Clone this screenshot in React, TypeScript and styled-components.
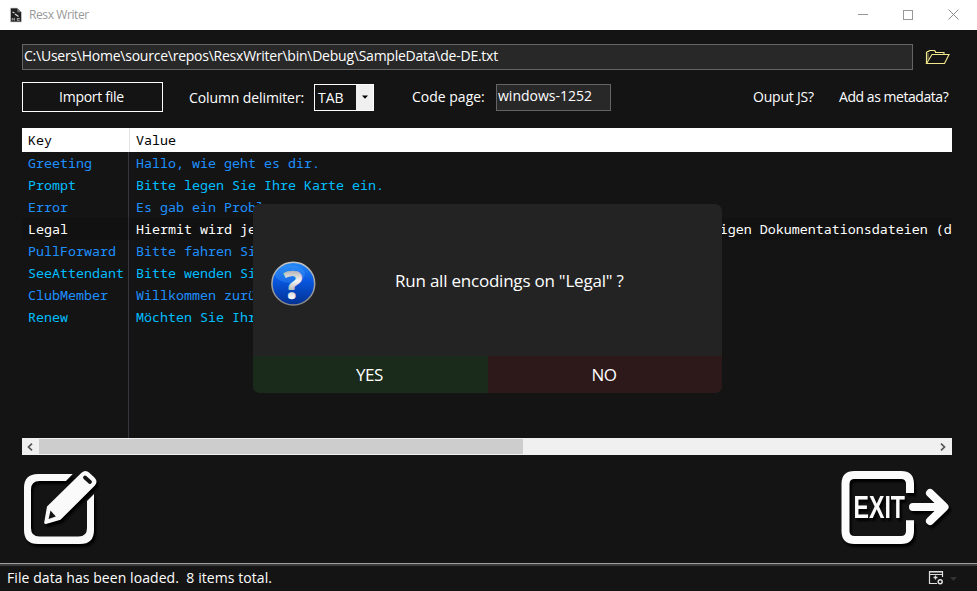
import React from "react";
import styled, { createGlobalStyle } from "styled-components";

const GlobalStyle = createGlobalStyle`
  *, *::before, *::after { box-sizing: border-box; }
  body { margin: 0; background: #141414; }
  button { font: inherit; letter-spacing: inherit; color: inherit; padding: 0; cursor: default; }
`;

const Window = styled.div`
  position: relative;
  display: flex;
  flex-direction: column;
  width: 977px;
  height: 591px;
  overflow: hidden;
  background: #141414;
  color: #fff;
  font: 14px/20px "Open Sans", sans-serif;
`;

const TitleBar = styled.header`
  display: flex;
  align-items: center;
  flex: 0 0 30px;
  padding-left: 9px;
  background: #fff;
  color: #999;
`;

const AppTitle = styled.span`
  flex: 1;
  margin-left: 6px;
  font-size: 12px;
  letter-spacing: -0.4px;
`;

const CaptionButton = styled.button`
  display: flex;
  align-items: center;
  justify-content: center;
  width: 46px;
  height: 30px;
  border: 0;
  background: none;
`;

const Content = styled.main`
  display: flex;
  flex-direction: column;
  flex: 1;
  padding: 14px 25px 0 22px;
`;

const PathRow = styled.div`
  display: flex;
  align-items: center;
  gap: 12px;
`;

const Field = styled.div<{ $width: number; $height: number; $tracking?: number; $line?: number }>`
  width: ${(p) => p.$width}px;
  height: ${(p) => p.$height}px;
  padding-left: 1px;
  border: 1px solid #646464;
  background: #282828;
  line-height: ${(p) => p.$line ?? 22}px;
  letter-spacing: ${(p) => p.$tracking ?? 0}px;
  white-space: pre;
`;

const Options = styled.div`
  display: flex;
  align-items: center;
  height: 30px;
  margin-top: 12px;
`;

const ImportButton = styled.button`
  width: 141px;
  height: 30px;
  padding-right: 2px;
  border: 1px solid #fff;
  background: #141414;
  letter-spacing: -0.27px;
`;

const Label = styled.span<{ $width: number; $gap: number; $tracking: number; $drop?: number }>`
  width: ${(p) => p.$width}px;
  margin-left: ${(p) => p.$gap}px;
  padding-top: ${(p) => p.$drop ?? 0}px;
  letter-spacing: ${(p) => p.$tracking}px;
  white-space: nowrap;
`;

const Select = styled.div`
  display: flex;
  width: 60px;
  height: 27px;
  border: 1px solid #fff;
  line-height: 25px;
`;

const SelectValue = styled.span`
  flex: 1;
  padding-left: 3px;
`;

const SelectArrow = styled.span`
  display: flex;
  align-items: center;
  justify-content: center;
  width: 17px;
  background: #f0f0f0;
`;

const Table = styled.section`
  width: 930px;
  height: 310px;
  margin-top: 16px;
  display: flex;
  flex-direction: column;
  overflow: hidden;
  font: 13.333px/22px "Noto Sans Mono", "DejaVu Sans Mono", monospace;
`;

const HeaderRow = styled.div`
  display: grid;
  grid-template-columns: 108px 1fr;
  flex: 0 0 24px;
  background: #fff;
  color: #000;
  line-height: 24px;
`;

const HeaderCell = styled.div`
  padding-left: 6px;
  &:first-child { border-right: 1px solid #e5e5e5; }
`;

const TableBody = styled.div`
  flex: 1;
  background: linear-gradient(#35353c, #35353c) 106px 0 / 1px 100% no-repeat;
`;

type Tone = "blue" | "cyan" | "selected";
const toneColor: Record<Tone, string> = { blue: "#1e90ff", cyan: "#00bfff", selected: "#fff" };

const Row = styled.div<{ $tone: Tone }>`
  display: grid;
  grid-template-columns: 108px 1fr;
  height: 22px;
  color: ${(p) => toneColor[p.$tone]};
  background: ${(p) => (p.$tone === "selected" ? "rgba(0, 0, 0, 0.12)" : "none")};
`;

const Cell = styled.div`
  padding-left: 6px;
  overflow: hidden;
  white-space: pre;
`;

const ScrollBar = styled.div`
  display: grid;
  grid-template-columns: 17px 484px 1fr 17px;
  width: 930px;
  height: 17px;
  background: #f0f0f0;
`;

const Thumb = styled.div`
  grid-column: 2;
  margin: 1px 0;
  background: #cdcdcd;
`;

const ScrollArrow = styled.span<{ $col: number }>`
  grid-column: ${(p) => p.$col};
  grid-row: 1;
  display: flex;
  align-items: center;
  justify-content: center;
  padding-right: 1px;
`;

const Actions = styled.div`
  display: flex;
  justify-content: space-between;
  margin-top: 11px;
`;

const IconButton = styled.button`
  display: block;
  height: 84px;
  border: 0;
  background: none;
  svg { display: block; filter: drop-shadow(2px 3px 1px #000); }
`;

const StatusBar = styled.footer`
  display: flex;
  align-items: center;
  flex: 0 0 28px;
  padding: 0 19px 0 7px;
  border-top: 1px solid #a0a0a0;
  box-shadow: inset 0 2px #3c3c3c;
  letter-spacing: 0.07px;
`;

const StatusText = styled.span`
  flex: 1;
  white-space: pre;
`;

const Dialog = styled.div`
  position: absolute;
  left: 253px;
  top: 204px;
  display: flex;
  flex-direction: column;
  width: 469px;
  height: 189px;
  border-radius: 7px;
  overflow: hidden;
  background: #232323;
  font-size: 17px;
  line-height: 24px;
`;

const DialogBody = styled.div`
  display: flex;
  flex: 1;
  padding-left: 17px;
`;

const QuestionIcon = styled.svg`
  margin-top: 57px;
  flex: none;
  overflow: visible;
`;

const Message = styled.p`
  margin: 65px 0 0 78px;
  letter-spacing: -0.22px;
  white-space: nowrap;
`;

const DialogButtons = styled.div`
  display: grid;
  grid-template-columns: 235px 234px;
  height: 37px;
`;

const DialogButton = styled.button<{ $color: string }>`
  border: 0;
  padding: 1px 2px 0 0;
  background: ${(p) => p.$color};
  letter-spacing: -0.5px;
`;

const rows: { key: string; value: string; tone: Tone }[] = [
  { key: "Greeting", value: "Hallo, wie geht es dir.", tone: "blue" },
  { key: "Prompt", value: "Bitte legen Sie Ihre Karte ein.", tone: "cyan" },
  { key: "Error", value: "Es gab ein Problem.", tone: "blue" },
  {
    key: "Legal",
    value: "Hiermit wird jeder Person, die eine Kopie dieser Software und der zugehörigen Dokumentationsdateien (d",
    tone: "selected",
  },
  { key: "PullForward", value: "Bitte fahren Sie", tone: "blue" },
  { key: "SeeAttendant", value: "Bitte wenden Sie", tone: "cyan" },
  { key: "ClubMember", value: "Willkommen zurück", tone: "blue" },
  { key: "Renew", value: "Möchten Sie Ihre", tone: "cyan" },
];

const FileIcon = () => (
  <svg width="14" height="16" viewBox="0 0 14 16">
    <path d="M1.500 1H8l4.500 4.500V15h-11z" fill="#202020" stroke="#d0d0d0" strokeWidth="0.700" />
    <path d="M8.300 1v4.200h4.200z" fill="#777" />
    <path d="M3.500 5l2 1M6 7l3.500 2.500" stroke="#ddd" strokeWidth="1.200" />
    <path d="M3.200 13.500v-2.200l1.100 1 1.100-1v2.200M10.700 11.500H8.300v1.800h2.400" fill="none" stroke="#bbb" strokeWidth="0.900" />
  </svg>
);

const FolderIcon = () => (
  <svg width="26" height="16" viewBox="0 0 26 16" fill="none" stroke="#f0e68c" strokeWidth="1.150">
    <path d="M1.500 14.500v-11l1-1h1l1-1h5l1 1v1h8.500v2" />
    <path d="M1.500 14.500L7 5.500h17l-4.500 9z" />
    <path d="M3 4v7" stroke="#8c8757" />
  </svg>
);

const EditIcon = () => (
  <svg width="80" height="84" viewBox="22 466 80 84">
    <path
      d="M72.700 474H38Q24 474 24 488v42q0 14 14 14h42q14 0 14-14v-36l-7 7v27q0 8.500-8.500 8.500H39.500q-8.500 0-8.500-8.500V489.500q0-8.500 8.500-8.500H66z"
      fill="#fafafa"
    />
    <path
      d="M47 506.500L81.500 472.700q4-3.500 7.800 0l5.400 5.100q3.500 4 .2 7.700L60.500 519.800 46 523.900q-2.200.4-1.700-1.800z"
      fill="#fafafa"
    />
    <path d="M85 477.500l5 4.500" stroke="#141414" strokeWidth="3.800" strokeLinecap="round" />
    <path d="M50.500 510.500l5.300 6-7.200 2.500z" fill="#141414" />
  </svg>
);

const ExitIcon = () => (
  <svg width="112" height="84" viewBox="840 466 112 84">
    <path
      d="M910 493V484q0-9-9-9H854.500q-9 0-9 9v47q0 9 9 9H901q9 0 9-9V520.300"
      fill="none"
      stroke="#fcfcfc"
      strokeWidth="8"
    />
    <path
      d="M913 507H943M930 493l14.500 14-14.500 14"
      fill="none"
      stroke="#fcfcfc"
      strokeWidth="8"
      strokeLinecap="round"
      strokeLinejoin="round"
    />
    <text
      x="853.500"
      y="517.500"
      fill="#fcfcfc"
      fontFamily="Liberation Sans"
      fontWeight="700"
      fontSize="31"
      textLength="51.500"
      lengthAdjust="spacingAndGlyphs"
    >
      EXIT
    </text>
  </svg>
);

const SettingsWindowIcon = () => (
  <svg width="30" height="15" viewBox="0 0 30 15">
    <path d="M14.500 7V1.500H1.500V13.500H9M2 4.500h12" fill="none" stroke="#dedede" strokeWidth="1.200" />
    <path d="M2 2.500h12" stroke="#888" />
    <path d="M7.500 5.500v4M5.500 7.500h4" stroke="#ddd" strokeWidth="1.300" />
    <circle cx="12.200" cy="11.700" r="2" fill="none" stroke="#e8e8e8" strokeWidth="1.400" />
    <path d="M22 7h7l-3.500 4z" fill="#333" />
  </svg>
);

export default function App() {
  return (
    <>
      <GlobalStyle />
      <Window>
        <TitleBar>
          <FileIcon />
          <AppTitle>Resx Writer</AppTitle>
          <CaptionButton aria-label="Minimize">
            <svg width="12" height="10"><path d="M2 4.500h10" stroke="#999" /></svg>
          </CaptionButton>
          <CaptionButton aria-label="Maximize">
            <svg width="10" height="10"><rect x=".5" y=".5" width="9" height="9" fill="none" stroke="#999" /></svg>
          </CaptionButton>
          <CaptionButton aria-label="Close">
            <svg width="12" height="12"><path d="M.5 .5l10 10M10.500 .5l-10 10" stroke="#8c8c8c" /></svg>
          </CaptionButton>
        </TitleBar>

        <Content>
          <PathRow>
            <Field $width={891} $height={26} $tracking={-0.24} $line={21}>
              C:\Users\Home\source\repos\ResxWriter\bin\Debug\SampleData\de-DE.txt
            </Field>
            <FolderIcon />
          </PathRow>

          <Options>
            <ImportButton>Import file</ImportButton>
            <Label $width={125} $gap={26} $tracking={-0.1} $drop={2}>Column delimiter:</Label>
            <Select>
              <SelectValue>TAB</SelectValue>
              <SelectArrow>
                <svg width="6" height="4"><path d="M0 .5h6L3 3.700z" fill="#000" /></svg>
              </SelectArrow>
            </Select>
            <Label $width={84} $gap={38} $tracking={0}>Code page:</Label>
            <Field $width={115} $height={27}>windows-1252</Field>
            <Label $width={61} $gap={142} $tracking={-0.22}>Ouput JS?</Label>
            <Label $width={111} $gap={25} $tracking={-0.45}>Add as metadata?</Label>
          </Options>

          <Table>
            <HeaderRow>
              <HeaderCell>Key</HeaderCell>
              <HeaderCell>Value</HeaderCell>
            </HeaderRow>
            <TableBody>
              {rows.map((row) => (
                <Row key={row.key} $tone={row.tone}>
                  <Cell>{row.key}</Cell>
                  <Cell>{row.value}</Cell>
                </Row>
              ))}
            </TableBody>
          </Table>
          <ScrollBar>
            <ScrollArrow $col={1}>
              <svg width="6" height="8"><path d="M5 .7L1.500 4 5 7.300" fill="none" stroke="#555" strokeWidth="1.700" /></svg>
            </ScrollArrow>
            <Thumb />
            <ScrollArrow $col={4}>
              <svg width="6" height="8"><path d="M1 .7L4.500 4 1 7.300" fill="none" stroke="#555" strokeWidth="1.700" /></svg>
            </ScrollArrow>
          </ScrollBar>

          <Actions>
            <IconButton aria-label="Edit"><EditIcon /></IconButton>
            <IconButton aria-label="Exit"><ExitIcon /></IconButton>
          </Actions>
        </Content>

        <StatusBar>
          <StatusText>File data has been loaded.  8 items total.</StatusText>
          <SettingsWindowIcon />
        </StatusBar>

        <Dialog role="dialog">
          <DialogBody>
            <QuestionIcon width="47" height="47" viewBox="0 0 47 47">
              <defs>
                <linearGradient id="ball" x1="0" y1="0" x2="0" y2="1">
                  <stop offset="0" stopColor="#258cf8" />
                  <stop offset=".45" stopColor="#0755dd" />
                  <stop offset="1" stopColor="#03308f" />
                </linearGradient>
                <linearGradient id="rim" x1="0" y1="0" x2="0" y2="1">
                  <stop offset="0" stopColor="#c4c4c4" />
                  <stop offset="1" stopColor="#858585" />
                </linearGradient>
                <linearGradient id="mark" x1="0" y1="8" x2="0" y2="38" gradientUnits="userSpaceOnUse">
                  <stop offset="0" stopColor="#a9a9a9" />
                  <stop offset=".4" stopColor="#f4f4f4" />
                  <stop offset=".65" stopColor="#c4c4c4" />
                  <stop offset="1" stopColor="#fff" />
                </linearGradient>
              </defs>
              <circle cx="23.300" cy="22.700" r="21.400" fill="url(#ball)" stroke="url(#rim)" strokeWidth="1.500" />
              <ellipse cx="20" cy="13" rx="15" ry="9" fill="#4aa2ff" opacity=".3" />
              <text
                x="23"
                y="37.700"
                textAnchor="middle"
                fontFamily="Open Sans"
                fontWeight="700"
                fontSize="40"
                fill="url(#mark)"
                stroke="url(#mark)"
                strokeWidth=".6"
              >
                ?
              </text>
            </QuestionIcon>
            <Message>Run all encodings on "Legal" ?</Message>
          </DialogBody>
          <DialogButtons>
            <DialogButton $color="#1b2b1b">YES</DialogButton>
            <DialogButton $color="#2d191a">NO</DialogButton>
          </DialogButtons>
        </Dialog>
      </Window>
    </>
  );
}
